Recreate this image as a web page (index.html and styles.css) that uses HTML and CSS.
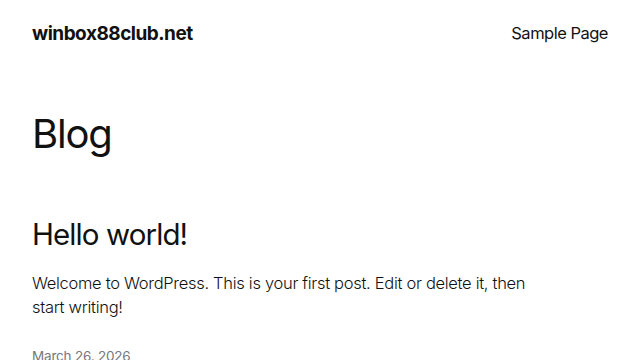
FILE: index.html
```html
<!DOCTYPE html>
<html lang="en">
<head>
<meta charset="utf-8">
<title>Blog – winbox88club.net</title>
<link rel="stylesheet" href="styles.css">
</head>
<body>
<header class="site-header">
  <a class="site-title" href="#">winbox88club.net</a>
  <nav class="site-nav"><a href="#">Sample Page</a></nav>
</header>
<main class="main">
  <h1 class="page-title">Blog</h1>
  <article class="post">
    <h2 class="post-title">Hello world!</h2>
    <p class="post-excerpt">Welcome to WordPress. This is your first post. Edit or delete it, then start writing!</p>
    <div class="post-date">March 26, 2026</div>
  </article>
</main>
</body>
</html>
```

FILE: styles.css
```css
* { box-sizing: border-box; }
html, body { margin: 0; padding: 0; background: #fff; }
body {
  font-family: Inter, "Noto Sans", sans-serif;
  color: #111;
  overflow: hidden;
  height: 360px;
}
a { color: inherit; text-decoration: none; }
.site-header {
  display: flex;
  justify-content: space-between;
  align-items: center;
  padding: 0 32px;
  height: 66px;
}
.site-title {
  font-size: 19px;
  font-weight: 700;
  letter-spacing: -0.5px;
}
.site-nav {
  font-size: 16.5px;
  font-weight: 400;
  letter-spacing: -0.5px;
}
.main { padding: 0 32px; }
.page-title {
  margin: 44px 0 0 0;
  font-size: 40px;
  font-weight: 400;
  letter-spacing: -1.2px;
  line-height: 1.2;
}
.post { margin-top: 59px; }
.post-title {
  margin: 0;
  font-size: 29.5px;
  font-weight: 400;
  letter-spacing: -0.9px;
  line-height: 1.2;
}
.post-excerpt {
  margin: 19px 0 0 0;
  max-width: 510px;
  font-size: 16.5px;
  line-height: 24px;
  font-weight: 300;
  letter-spacing: -0.3px;
}
.post-date {
  margin-top: 29px;
  font-size: 13.5px;
  color: #777;
  letter-spacing: -0.2px;
}
```
